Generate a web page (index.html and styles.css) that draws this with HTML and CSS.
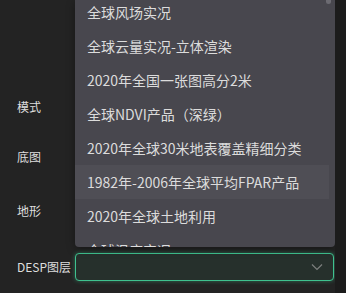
FILE: index.html
```html
<!DOCTYPE html>
<html lang="zh-CN">
<head>
    <meta charset="UTF-8">
    <title>图层设置</title>
    <link rel="stylesheet" href="styles.css">
</head>
<body>
    <div class="panel">
        <form class="layer-form">
            <div class="form-row row-mode">
                <label class="form-label">模式</label>
            </div>
            <div class="form-row row-base">
                <label class="form-label">底图</label>
            </div>
            <div class="form-row row-terrain">
                <label class="form-label">地形</label>
            </div>
            <div class="form-row row-desp">
                <label class="form-label">DESP图层</label>
                <div class="select is-focus">
                    <span class="select-value"></span>
                    <svg class="select-arrow" width="12" height="8" viewBox="0 0 12 8">
                        <path d="M1 1.5 L6 6.5 L11 1.5" fill="none" stroke="#7c7f7e" stroke-width="1.2"/>
                    </svg>
                </div>
            </div>
        </form>

        <div class="dropdown">
            <ul class="dropdown-list">
                <li class="dropdown-item">全球风场实况</li>
                <li class="dropdown-item">全球云量实况-立体渲染</li>
                <li class="dropdown-item">2020年全国一张图高分2米</li>
                <li class="dropdown-item">全球NDVI产品（深绿）</li>
                <li class="dropdown-item">2020年全球30米地表覆盖精细分类</li>
                <li class="dropdown-item hover">1982年-2006年全球平均FPAR产品</li>
                <li class="dropdown-item">2020年全球土地利用</li>
                <li class="dropdown-item">全球温度实况</li>
            </ul>
            <div class="scroll-thumb"></div>
        </div>
    </div>
</body>
</html>
```

FILE: styles.css
```css
body {
    margin: 0;
    padding: 0;
    background-color: #1c1c1c;
    font-family: "Noto Sans CJK SC", "Liberation Sans", sans-serif;
    color: #dcdcdc;
}

.panel {
    position: relative;
    width: 335px;
    height: 293px;
    background-color: #232323;
    overflow: hidden;
}

.layer-form {
    display: flex;
    flex-direction: column;
    padding-top: 93px;
}

.form-row {
    display: flex;
    align-items: center;
    height: 28px;
}

.row-base {
    margin-top: 22px;
}

.row-terrain {
    margin-top: 26px;
}

.row-desp {
    margin-top: 28px;
}

.form-label {
    width: 58px;
    padding-left: 17px;
    font-size: 12px;
    line-height: 28px;
    color: #dedede;
}

.select {
    display: flex;
    align-items: center;
    justify-content: flex-end;
    box-sizing: border-box;
    width: 259px;
    height: 28px;
    padding-right: 10px;
    border: 1px solid #3fc18f;
    border-radius: 4px;
    background-color: #26302c;
}

.select.is-focus {
    box-shadow: 0 0 4px rgba(63, 193, 143, 0.45);
}

.dropdown {
    position: absolute;
    left: 75px;
    top: 0;
    width: 260px;
    height: 247px;
    background-color: #48474e;
    border-radius: 0 0 4px 4px;
    box-shadow: 0 2px 8px rgba(0, 0, 0, 0.35);
    overflow: hidden;
}

.dropdown-list {
    list-style: none;
    margin: -5px 0 0 0;
    padding: 0;
}

.dropdown-item {
    height: 34px;
    margin-right: 6px;
    padding: 0 26px 0 12px;
    font-size: 14px;
    line-height: 34px;
    white-space: nowrap;
    overflow: hidden;
    text-overflow: ellipsis;
}

.dropdown-item.hover {
    background-color: #4f4e55;
}

.scroll-thumb {
    position: absolute;
    right: 4px;
    top: 0;
    width: 5px;
    height: 4px;
    border-radius: 0 0 3px 3px;
    background-color: #6c6b72;
}
```
